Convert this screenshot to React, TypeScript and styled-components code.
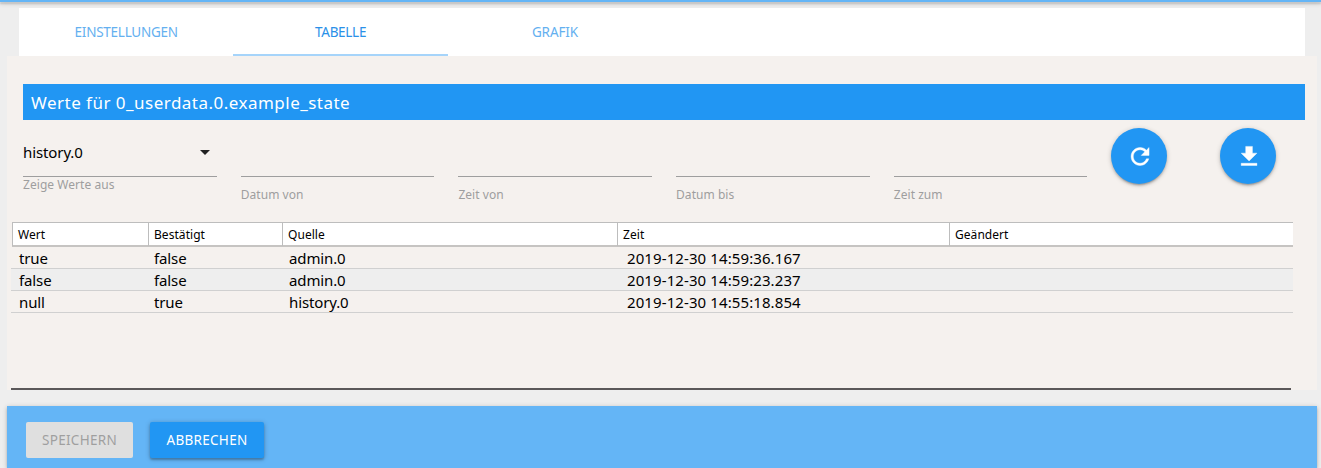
import React from "react";
import styled, { createGlobalStyle } from "styled-components";

const Global = createGlobalStyle`
  * { box-sizing: border-box; }
  body {
    margin: 0;
    height: 468px;
    overflow: hidden;
    background: #eeeeee;
    color: #000;
    font-family: "Noto Sans", "Open Sans", sans-serif;
    font-size: 15px;
  }
`;

const Page = styled.div`
  display: flex;
  flex-direction: column;
  height: 468px;
  overflow: hidden;
`;

const TopBar = styled.header`
  flex: none;
  height: 2px;
  margin-bottom: 6px;
  background: #64b5f6;
  box-shadow: 0 2px 2px 0 rgba(0, 0, 0, 0.14), 0 3px 1px -2px rgba(0, 0, 0, 0.3),
    0 1px 5px 0 rgba(0, 0, 0, 0.25);
`;

const Tabs = styled.nav`
  position: relative;
  flex: none;
  display: flex;
  height: 48px;
  margin: 0 16px 0 19px;
  background: #fff;
`;

const Tab = styled.a<{ $active?: boolean; $tracking: number }>`
  width: 214.4px;
  height: 48px;
  line-height: 48px;
  text-align: center;
  font-size: 13.5px;
  letter-spacing: ${(p) => p.$tracking}px;
  color: ${(p) => (p.$active ? "#2a90e8" : "#64b0f0")};
  border-bottom: 2px solid ${(p) => (p.$active ? "#a6d4fa" : "transparent")};
`;

const Panel = styled.main`
  flex: none;
  height: 334px;
  margin: 0 4px 0 7px;
  padding: 28px 0 0;
  background: #f5f1ee;
  display: flex;
  flex-direction: column;
`;

const Title = styled.h1`
  flex: none;
  margin: 0 12px 0 16px;
  padding-left: 8px;
  height: 36px;
  line-height: 37px;
  font-size: 17px;
  font-weight: 400;
  letter-spacing: 0.48px;
  color: #fff;
  background: #2196f3;
`;

const Filters = styled.div`
  flex: none;
  display: flex;
  height: 102px;
  padding: 8px 0 0 16px;
  gap: 24px;
`;

const Field = styled.div`
  width: 193.7px;
`;

const FieldInput = styled.div`
  display: flex;
  align-items: center;
  justify-content: space-between;
  height: 49px;
  padding-right: 7px;
  border-bottom: 1px solid #9e9e9e;
  letter-spacing: -0.1px;
`;

const Caption = styled.label<{ $raised?: boolean }>`
  display: block;
  margin-top: ${(p) => (p.$raised ? 0 : 10)}px;
  line-height: 16px;
  font-size: 12px;
  letter-spacing: 0.05px;
  color: #9e9e9e;
`;

const RoundButton = styled.button`
  flex: none;
  display: flex;
  align-items: center;
  justify-content: center;
  width: 56px;
  height: 56px;
  margin-right: 29px;
  padding: 0;
  border: 0;
  border-radius: 50%;
  background: #2196f3;
  box-shadow: 0 2px 2px 0 rgba(0, 0, 0, 0.14), 0 3px 1px -2px rgba(0, 0, 0, 0.12),
    0 1px 5px 0 rgba(0, 0, 0, 0.2);
`;

const Glyph = styled.svg`
  width: 27px;
  height: 27px;
  fill: #fff;
  stroke: #fff;
  stroke-width: 0.35;
`;

const columns = "136px 134px 335px 332px 1fr";

const TableHead = styled.div`
  flex: none;
  display: grid;
  grid-template-columns: ${columns};
  height: 25px;
  margin: 0 24px 0 5px;
  background: #fff;
  border-top: 1px solid #bdbdbd;
  border-bottom: 2px solid #c6c4c2;
`;

const HeadCell = styled.div`
  padding-left: 5px;
  line-height: 23px;
  font-size: 12px;
  letter-spacing: 0.05px;
  border-left: 1px solid #bdbdbd;
`;

const Row = styled.div<{ $shaded?: boolean }>`
  flex: none;
  display: grid;
  grid-template-columns: 135px 135px 338px 1fr;
  height: 22px;
  margin: 0 24px 0 4px;
  padding-left: 8px;
  line-height: 23px;
  background: ${(p) => (p.$shaded ? "#eeeeee" : "transparent")};
  border-bottom: 1px solid #d0d0d0;
`;

const Cell = styled.span<{ $tracking?: number }>`
  letter-spacing: ${(p) => p.$tracking ?? -0.12}px;
`;

const PanelLine = styled.hr`
  width: 1280px;
  height: 2px;
  margin: auto 0 0 4px;
  border: 0;
  background: #5b5859;
`;

const Footer = styled.footer`
  flex: 1;
  display: flex;
  gap: 17px;
  margin: 16px 4px 0 7px;
  padding: 16px 19px 0;
  background: #64b5f6;
  box-shadow: 0 2px 2px 0 rgba(0, 0, 0, 0.14), 0 1px 5px 0 rgba(0, 0, 0, 0.2);
`;

const Button = styled.button<{ $width: number }>`
  width: ${(p) => p.$width}px;
  height: 36px;
  padding: 0;
  border: 0;
  border-radius: 2px;
  font: 13.5px/36px "Noto Sans", sans-serif;
  letter-spacing: 0.3px;
  color: #fff;
  background: #2196f3;
  box-shadow: 0 2px 2px 0 rgba(0, 0, 0, 0.2), 0 1px 5px 0 rgba(0, 0, 0, 0.25);
  &:disabled {
    color: #9f9f9f;
    background: #dfdfdf;
    box-shadow: none;
  }
`;

const rows = [
  ["true", "false", "admin.0", "2019-12-30 14:59:36.167"],
  ["false", "false", "admin.0", "2019-12-30 14:59:23.237"],
  ["null", "true", "history.0", "2019-12-30 14:55:18.854"],
];

export default function App() {
  return (
    <Page>
      <Global />
      <TopBar />
      <Tabs>
        <Tab $tracking={-0.25}>EINSTELLUNGEN</Tab>
        <Tab $active $tracking={-0.3}>TABELLE</Tab>
        <Tab $tracking={-0.1}>GRAFIK</Tab>
      </Tabs>
      <Panel>
        <Title>Werte für 0_userdata.0.example_state</Title>
        <Filters>
          <Field>
            <FieldInput>
              history.0
              <svg width="10" height="5" viewBox="0 0 10 5">
                <path d="M0 0h10L5 5z" fill="#212121" />
              </svg>
            </FieldInput>
            <Caption $raised>Zeige Werte aus</Caption>
          </Field>
          {["Datum von", "Zeit von", "Datum bis", "Zeit zum"].map((label) => (
            <Field key={label}>
              <FieldInput />
              <Caption>{label}</Caption>
            </Field>
          ))}
          <RoundButton aria-label="Aktualisieren">
            <Glyph viewBox="-0.5 0 24 24">
              <path d="M17.65 6.35C16.2 4.9 14.21 4 12 4c-4.42 0-7.99 3.58-7.99 8s3.57 8 7.99 8c3.73 0 6.84-2.55 7.73-6h-2.08c-.82 2.33-3.04 4-5.65 4-3.31 0-6-2.69-6-6s2.69-6 6-6c1.66 0 3.14.69 4.22 1.78L13 11h7V4l-2.35 2.35z" />
            </Glyph>
          </RoundButton>
          <RoundButton aria-label="Herunterladen">
            <Glyph viewBox="-0.5 0 24 24">
              <path d="M19 9h-4V3H9v6H5l7 7 7-7zM5 18v2h14v-2H5z" />
            </Glyph>
          </RoundButton>
        </Filters>
        <TableHead>
          {["Wert", "Bestätigt", "Quelle", "Zeit", "Geändert"].map((name) => (
            <HeadCell key={name}>{name}</HeadCell>
          ))}
        </TableHead>
        {rows.map((row, i) => (
          <Row key={row[3]} $shaded={i % 2 === 1}>
            {row.map((value, c) => (
              <Cell key={c} $tracking={c === 3 ? 0.1 : undefined}>
                {value}
              </Cell>
            ))}
          </Row>
        ))}
        <PanelLine />
      </Panel>
      <Footer>
        <Button disabled $width={107}>SPEICHERN</Button>
        <Button $width={114}>ABBRECHEN</Button>
      </Footer>
    </Page>
  );
}
